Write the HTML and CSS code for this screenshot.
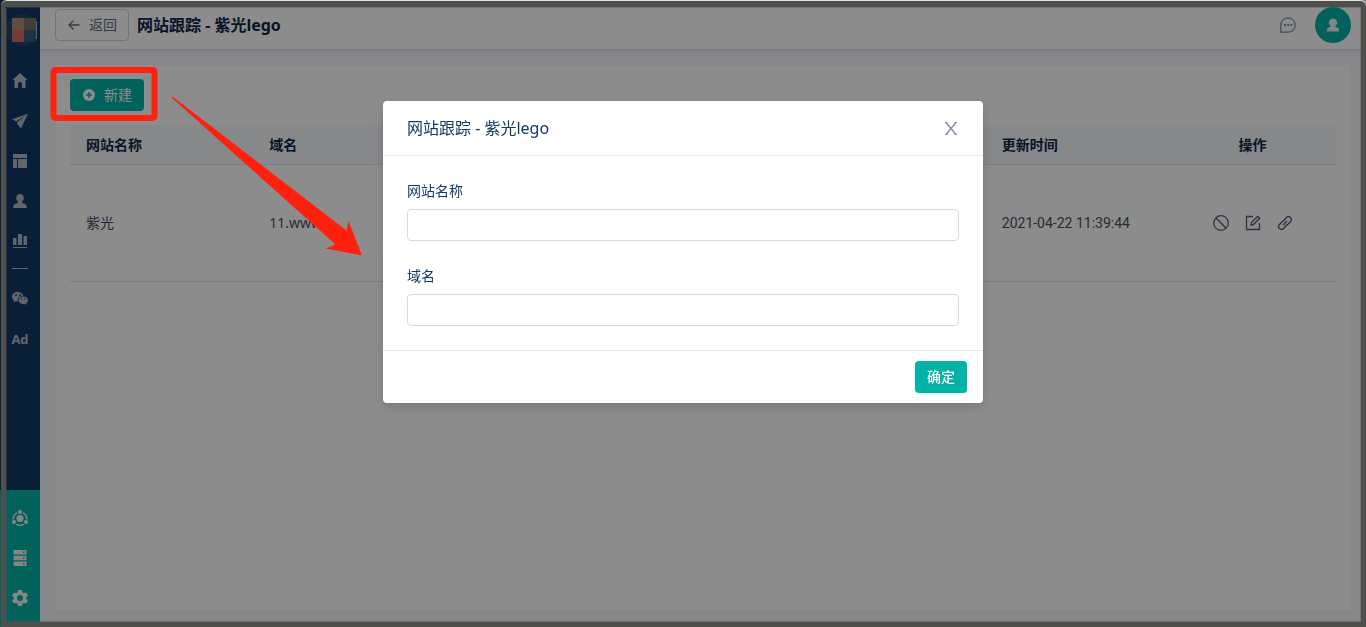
FILE: index.html
```html
<!DOCTYPE html>
<html lang="zh-CN">
<head>
    <meta charset="UTF-8">
    <meta name="viewport" content="width=device-width, initial-scale=1.0">
    <title>网站跟踪 - 紫光lego</title>
    <link rel="stylesheet" href="styles.css">
</head>
<body>

<div class="app">
    <!-- Sidebar -->
    <nav class="sidebar">
        <a class="logo" href="#" aria-label="Logo">
            <svg width="32" height="32" viewBox="0 0 32 32">
                <circle cx="16" cy="16" r="16" fill="#244661"/>
                <path fill="#b98a76" d="M6 4h12v12H6z"/>
                <path fill="#75716c" d="M18 4h12v12H18z"/>
                <path fill="#d9686b" d="M6 16h12v12H6z"/>
                <path fill="#326077" d="M18 16h12v12H18z"/>
                <path stroke="#a8b5c2" fill="none" d="M30.500 7v18"/>
            </svg>
        </a>
        <div class="nav-list">
            <a href="#" aria-label="首页"><svg width="16" height="16" viewBox="0 0 16 16"><path d="M8 0 15.500 7h-2V15H10V11a2 2 0 0 0-4 0v4H2.500V7h-2z"/></svg></a>
            <a href="#" aria-label="发送"><svg width="16" height="16" viewBox="0 0 16 16"><path d="M15.800.800.300 6.300l3.800 2.200zM15.800.800 5 9.300v1.200l3.700 4.700z"/><path d="M15.800.800 9 15.500 6 10z"/></svg></a>
            <a href="#" aria-label="页面"><svg width="16" height="16" viewBox="0 0 16 16"><path d="M1 1h14v4H1zM1 6h4v9H1zM6 6h9v9H6z"/></svg></a>
            <a href="#" aria-label="用户"><svg width="16" height="16" viewBox="0 0 16 16"><path d="M8 1c2.300 0 3.800 1.600 3.800 3.800 0 1.500-.7 3-1.700 3.700-.3 1.200.2 1.700 1.400 2.100 2.100.6 3.300 1.200 3.300 4.400H1.200c0-3.200 1.200-3.800 3.300-4.400 1.200-.4 1.700-.9 1.400-2.100-1-.7-1.700-2.200-1.700-3.700C4.200 2.600 5.700 1 8 1z"/></svg></a>
            <a href="#" aria-label="统计"><svg width="16" height="16" viewBox="0 0 16 16"><path d="M1 5h3.500v7H1zM6 1h4v11H6zM11.500 3H15v9h-3.500zM1 14h14v1H1z"/></svg></a>
            <hr>
            <a href="#" aria-label="微信"><svg width="16" height="16" viewBox="0 0 16 16"><path fill-rule="evenodd" d="M6 1C2.700 1 0 3 0 5.800c0 1.500.8 2.800 2 3.700L1.500 11.500l2.300-1.200c.7.200 1.300.3 2 .3C5.200 7 7.500 4.800 11.400 4.800 10.800 2.500 8.600 1 6 1zM4 3.300a.9.900 0 1 1 0 1.800.9.900 0 0 1 0-1.800zm4 0a.9.900 0 1 1 0 1.800.9.900 0 0 1 0-1.800z"/><path fill-rule="evenodd" d="M11.300 5.500c-2.600 0-4.700 1.700-4.700 3.800s2.100 3.800 4.700 3.800c.6 0 1.100-.1 1.600-.2l1.700.8-.4-1.500c1.100-.7 1.800-1.700 1.800-2.900 0-2.100-2.100-3.800-4.700-3.800zM9.800 7.300a.7.700 0 1 1 0 1.400.7.700 0 0 1 0-1.400zm3 0a.7.700 0 1 1 0 1.400.7.700 0 0 1 0-1.400z"/></svg></a>
            <a class="nav-text" href="#">Ad</a>
        </div>
        <div class="nav-bottom">
            <a href="#" aria-label="团队"><svg width="16" height="16" viewBox="0 0 16 16"><circle cx="8" cy="8.500" r="3.500"/><circle cx="8" cy="2" r="2"/><circle cx="2" cy="12" r="2"/><circle cx="14" cy="12" r="2"/><path fill="none" stroke="currentColor" stroke-width="1.300" d="M5.200 2.800A6.800 6.800 0 0 0 1.200 9.500M10.800 2.800a6.800 6.800 0 0 1 4 6.700M4.200 14.200a6.800 6.800 0 0 0 7.600 0"/></svg></a>
            <a href="#" aria-label="数据"><svg width="16" height="16" viewBox="0 0 16 16"><path fill-rule="evenodd" d="M1.500 0h13v4.500h-13zM11 1.500V3h1.500V1.500zM1.500 5.800h13v4.500h-13zM11 7.300v1.500h1.500V7.300zM1.500 11.600h13V16h-13zM11 13.100v1.500h1.500v-1.500z"/></svg></a>
            <a href="#" aria-label="设置"><svg width="16" height="16" viewBox="0 0 16 16"><path fill-rule="evenodd" d="M6 0h4l.5 2.300 1.500.8 2.200-.7 1.800 3.200L14.300 7.200v1.600L16 10.400l-1.800 3.200-2.200-.7-1.500.8L10 16H6l-.5-2.300-1.500-.8-2.200.7L0 10.400l1.700-1.600V7.200L0 5.600l1.800-3.200 2.200.7 1.500-.8zM8 5a3 3 0 1 0 0 6 3 3 0 0 0 0-6z"/></svg></a>
        </div>
    </nav>

    <div class="main">
        <!-- Header -->
        <header class="header">
            <button class="btn-back" type="button">
                <svg width="12" height="12" viewBox="0 0 12 12" fill="none" stroke="currentColor" stroke-width="1.300"><path d="M11.500 6H1M5.500 1.500 1 6l4.500 4.500"/></svg>
                返回
            </button>
            <h1>网站跟踪 - 紫光lego</h1>
            <div class="header-right">
                <a class="message" href="#" aria-label="消息">
                    <svg width="16" height="16" viewBox="0 0 16 16" fill="none" stroke="currentColor" stroke-width="1.300"><path d="M.800 15.200V8A7.200 7.200 0 1 1 8 15.200z"/><path stroke="none" fill="currentColor" d="M4 7h2v2H4zM7.200 7h2v2h-2zM10.400 7h2v2h-2z"/></svg>
                </a>
                <a class="avatar" href="#" aria-label="账号">
                    <svg width="14" height="14" viewBox="0 0 14 14" fill="currentColor"><path d="M7 .5a4 4 0 0 1 2.500 7.200V9l2 .5c1.200.4 1.500 1.500 1.500 4H1c0-2.500.3-3.600 1.500-4l2-.5V7.700A4 4 0 0 1 7 .5z"/></svg>
                </a>
            </div>
        </header>

        <!-- Content -->
        <main class="panel">
            <button class="btn btn-new" type="button">
                <svg width="12" height="12" viewBox="0 0 12 12"><circle cx="6" cy="6" r="6" fill="currentColor"/><path stroke="#00b3a6" stroke-width="1.500" d="M3 6h6M6 3v6"/></svg>
                新建
            </button>
            <table>
                <thead>
                    <tr>
                        <th>网站名称</th>
                        <th>域名</th>
                        <th></th>
                        <th></th>
                        <th></th>
                        <th>更新时间</th>
                        <th class="actions">操作</th>
                    </tr>
                </thead>
                <tbody>
                    <tr>
                        <td>紫光</td>
                        <td>11.www</td>
                        <td></td>
                        <td></td>
                        <td></td>
                        <td class="time">2021-04-22 11:39:44</td>
                        <td class="actions">
                            <div class="action-list">
                                <a href="#" aria-label="禁用"><svg width="16" height="16" viewBox="0 0 16 16"><circle cx="8" cy="8" r="7.300"/><path d="m2.800 2.800 10.400 10.400"/></svg></a>
                                <a href="#" aria-label="编辑"><svg width="16" height="16" viewBox="0 0 16 16"><path d="M8 1.500H1.500v13h13V8"/><path d="m6 10 .7-2.700 6-6 2 2-6 6z"/></svg></a>
                                <a href="#" aria-label="链接"><svg width="16" height="16" viewBox="0 0 16 16"><path d="M6.200 6 9.500 2.500a2.800 2.800 0 0 1 4 4L11 9.200a2.800 2.800 0 0 1-2.500.8M9.800 10l-3.300 3.500a2.800 2.800 0 0 1-4-4L5 6.800A2.800 2.800 0 0 1 7.500 6M6 10l4-4"/></svg></a>
                            </div>
                        </td>
                    </tr>
                </tbody>
            </table>
        </main>
    </div>
</div>

<!-- Dialog -->
<div class="mask">
    <form class="dialog" role="dialog" aria-labelledby="dialogTitle">
        <div class="dialog-header">
            <h2 id="dialogTitle">网站跟踪 - 紫光lego</h2>
            <button class="btn-close" type="button" aria-label="关闭">
                <svg width="14" height="14" viewBox="0 0 14 14" fill="none" stroke="currentColor"><path stroke-width="1.500" d="m2 1.500 10 12M12 1.500l-10 12"/><path d="M1 1.500h2.500M10.500 1.500H13M1 13.500h2.500M10.500 13.500H13"/></svg>
            </button>
        </div>
        <div class="dialog-body">
            <div class="form-group">
                <label for="siteName">网站名称</label>
                <input type="text" id="siteName">
            </div>
            <div class="form-group">
                <label for="domain">域名</label>
                <input type="text" id="domain">
            </div>
        </div>
        <div class="dialog-footer">
            <button class="btn btn-ok" type="button">确定</button>
        </div>
    </form>
</div>

<!-- Window edge and guide marks -->
<div class="window-edge"></div>
<svg class="guide" width="370" height="260" viewBox="0 0 370 260">
    <rect x="53.500" y="70" width="101" height="48" rx="2" fill="none" stroke="#ff2010" stroke-width="6"/>
    <path fill="#ff2010" d="M171.500 97.500 172.500 96.500 346.500 230.500 348.500 221 362 255.500 325.500 248.500 335.500 244.500z"/>
</svg>

</body>
</html>
```
FILE: styles.css
```css
* {
    box-sizing: border-box;
}
body {
    margin: 0;
    font-family: "Noto Sans", "Noto Sans CJK SC", sans-serif;
    font-size: 14px;
    line-height: 22px;
    color: #435266;
}
a {
    color: inherit;
    text-decoration: none;
}
svg {
    display: block;
}
button, input {
    font: inherit;
}
.app {
    display: flex;
    min-height: 100vh;
    background-color: #f3f6fa;
}

/* Sidebar */
.sidebar {
    display: flex;
    flex-direction: column;
    width: 40px;
    background-color: #123a64;
    color: #b2bac4;
    fill: currentColor;
}
.logo {
    padding: 14px 0 0 6px;
}
.nav-list {
    flex: 1;
    padding-top: 15px;
}
.sidebar .nav-list a, .sidebar .nav-bottom a {
    display: flex;
    align-items: center;
    justify-content: center;
    height: 40px;
}
.nav-list hr {
    width: 16px;
    height: 1px;
    margin: 7px auto 10px;
    border: none;
    background-color: #b2bac4;
}
.nav-text {
    font-family: "Open Sans", sans-serif;
    font-size: 13px;
    font-weight: bold;
}
.nav-bottom {
    padding: 8px 0 9px;
    background-color: #00b3a6;
    color: #f0f5f5;
}

/* Header */
.main {
    flex: 1;
    display: flex;
    flex-direction: column;
}
.header {
    display: flex;
    align-items: center;
    gap: 8px;
    height: 49px;
    padding: 0 15px;
    background-color: #fff;
    box-shadow: 0 1px 4px rgba(0, 21, 41, 0.15);
}
.btn-back {
    display: flex;
    align-items: center;
    gap: 9px;
    height: 32px;
    padding: 0 11px 0 12px;
    border: 1px solid #cdd3db;
    border-radius: 4px;
    background-color: #fff;
    color: #5d6c80;
}
.header h1 {
    margin: 0;
    font-size: 16px;
    font-weight: bold;
    color: #0d2747;
}
.header-right {
    display: flex;
    align-items: center;
    gap: 19px;
    margin-left: auto;
}
.message {
    color: #8492a6;
}
.avatar {
    display: flex;
    align-items: center;
    justify-content: center;
    width: 36px;
    height: 36px;
    border-radius: 50%;
    background-color: #00b3a6;
    color: #f2f2f2;
}

/* Content */
.panel {
    flex: 1;
    margin: 16px 16px 17px;
    padding: 14px;
    background-color: #fff;
}
.btn {
    height: 32px;
    border: none;
    border-radius: 4px;
    background-color: #00b3a6;
    color: #fff;
}
.btn-new {
    display: flex;
    align-items: center;
    gap: 9px;
    padding: 0 12px 0 13px;
}
table {
    width: 100%;
    margin-top: 14px;
    border-collapse: separate;
    border-spacing: 0;
    table-layout: fixed;
}
th, td {
    height: 40px;
    padding: 0 16px;
    border-bottom: 1px solid #e1e5ea;
    text-align: left;
}
th {
    background-color: #f5f8fb;
    color: #0d2747;
}
td {
    height: 117px;
}
.time {
    font-family: Roboto, sans-serif;
    white-space: nowrap;
}
.actions {
    width: 167px;
    text-align: center;
}
.action-list {
    display: flex;
    justify-content: center;
    gap: 16px;
    fill: none;
    stroke: #4c5f7a;
    stroke-width: 1.3px;
}

/* Dialog */
.mask {
    position: fixed;
    inset: 0;
    padding: 101px 16px 16px;
    background-color: rgba(0, 0, 0, 0.45);
}
.dialog {
    max-width: 600px;
    margin: 0 auto;
    border-radius: 4px;
    background-color: #fff;
    color: #123a64;
    box-shadow: 0 4px 12px rgba(0, 0, 0, 0.15);
}
.dialog-header {
    display: flex;
    align-items: center;
    justify-content: space-between;
    padding: 16px 24px;
    border-bottom: 1px solid #e8e8e8;
}
.dialog-header h2 {
    margin: 0;
    font-size: 16px;
    font-weight: normal;
}
.btn-close {
    padding: 0 1px;
    border: none;
    background: none;
    color: #8492a6;
}
.dialog-body {
    padding: 24px;
}
.form-group + .form-group {
    margin-top: 24px;
}
.form-group label {
    display: block;
    margin-bottom: 7px;
}
.form-group input {
    display: block;
    width: 100%;
    height: 32px;
    padding: 4px 11px;
    border: 1px solid #d3dbe3;
    border-radius: 4px;
}
.dialog-footer {
    display: flex;
    justify-content: flex-end;
    padding: 10px 16px;
    border-top: 1px solid #e8e8e8;
}
.btn-ok {
    padding: 0 12px;
    font-weight: 500;
    box-shadow: 0 2px 0 rgba(0, 0, 0, 0.04);
}

/* Window edge and guide marks */
.window-edge {
    position: fixed;
    inset: 1px 0 0 1px;
    border: 6px solid #4e4e4d;
    border-width: 6px 5px 5px;
    border-radius: 6px 6px 0 0;
    box-shadow: 0 -1px 0 #dce6e4, inset 0 0 0 1px rgba(80, 80, 80, 0.4);
    pointer-events: none;
}
.guide {
    position: fixed;
    top: 0;
    left: 0;
    pointer-events: none;
}
```
